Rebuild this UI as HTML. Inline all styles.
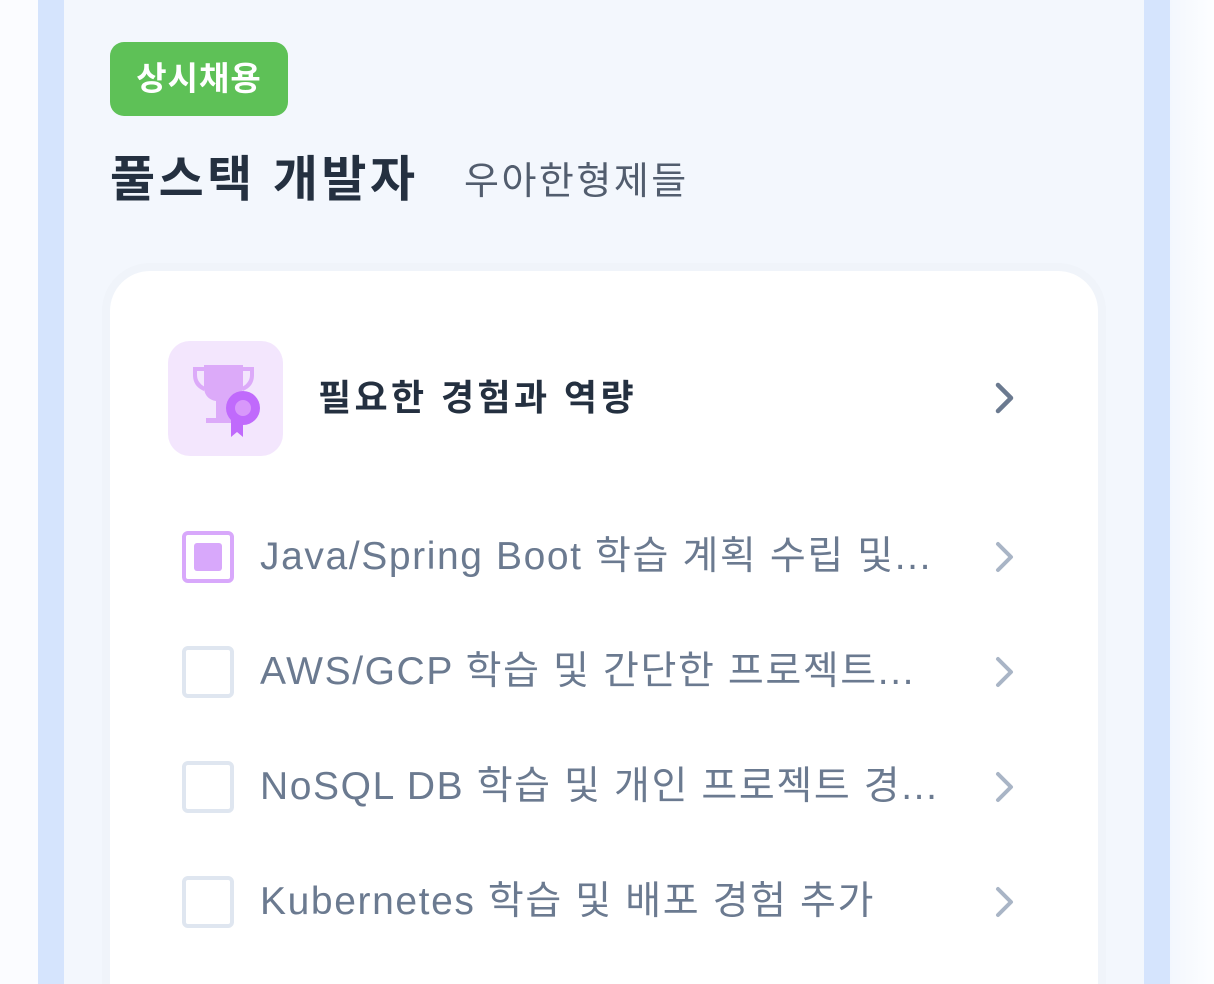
<!DOCTYPE html>
<html style="width:1214px;height:984px;overflow:hidden"><head><meta charset="utf-8"><style>
*{margin:0;padding:0;box-sizing:border-box}
body{width:1214px;height:984px;overflow:hidden;background:linear-gradient(90deg,#fbfcff 0,#fbfcff 38px,#fff 100%);font-family:"Liberation Sans","Noto Sans CJK KR",sans-serif;position:relative}
.wrap{position:absolute;left:0;top:0;width:1214px;height:984px;overflow:hidden}
.outer{position:absolute;left:38px;top:0;width:1132px;height:984px;background:#d5e4fd}
.inner{position:absolute;left:64px;top:0;width:1080px;height:984px;background:#f3f7fd}
.right{position:absolute;left:1170px;top:0;width:44px;height:984px;background:linear-gradient(90deg,#f3f7fe,#fdfeff)}
.badge{position:absolute;left:110px;top:42px;width:178px;height:74px;background:#5ec157;border-radius:14px;color:#fff;font-weight:700;font-size:33px;line-height:74px;text-align:center;letter-spacing:1px}
.title{position:absolute;left:110px;top:146px;font-size:49px;font-weight:700;color:#243040;line-height:68px;letter-spacing:3.5px}
.comp{position:absolute;left:464px;top:154px;font-size:38px;color:#525d6e;line-height:56px;letter-spacing:2.5px}
.card{position:absolute;left:110px;top:271px;width:988px;height:760px;background:#fff;border-radius:40px;box-shadow:0 0 0 8px #f0f4fa}
.ibox{position:absolute;left:168px;top:341px;width:115px;height:115px;border-radius:22px;background:#f3e6fd}
.h{position:absolute;left:318px;top:372px;font-size:36px;font-weight:700;color:#243040;line-height:52px;letter-spacing:3.4px}
.chev{position:absolute;left:993px;width:24px;height:36px}
.cb{position:absolute;left:182px;width:52px;height:52px;border:4px solid #dfe6f0;border-radius:6px}
.cb.on{border-color:#d8a8fb}
.cb.on::after{content:"";position:absolute;left:8px;top:8px;width:28px;height:28px;background:#d8a8fb;border-radius:3px}
.t{position:absolute;left:260px;font-size:39px;color:#6b7a90;line-height:56px;white-space:nowrap;letter-spacing:1.6px}
</style></head><body><div class="wrap">
<div class="outer"></div><div class="inner"></div><div class="right"></div>
<div class="badge">상시채용</div>
<div class="title">풀스택 개발자</div>
<div class="comp">우아한형제들</div>
<div class="card"></div>
<div class="ibox"><svg width="115" height="115" viewBox="0 0 115 115">
<path d="M25 26h12v4h-8v4c0 6 4 10 8 12l-1 4c-7-3-11-8-11-16z" fill="#dcaaf9"/>
<path d="M86 26H74v4h8v4c0 6-4 10-8 12l1 4c7-3 11-8 11-16z" fill="#dcaaf9"/>
<path d="M36 24h39v22c0 8-6 13-13 14v12h14v10H38v-5h10V60c-7-1-12-6-12-14z" fill="#dcaaf9"/>
<path d="M63 78v18l6-5 6 5V78z" fill="#c06afc"/>
<circle cx="75" cy="67" r="17" fill="#c06afc"/>
<circle cx="75" cy="67" r="8" fill="#d898fb"/>
</svg></div>
<div class="h">필요한 경험과 역량</div>
<svg class="chev" style="top:380px" viewBox="0 0 24 36"><path d="M5 5l13 13L5 31" fill="none" stroke="#6b7a90" stroke-width="4.5" stroke-linecap="round" stroke-linejoin="round"/></svg>

<div class="cb on" style="top:531px"></div>
<div class="t" style="top:529px">Java/Spring Boot 학습 계획 수립 및...</div>
<svg class="chev" style="top:539px" viewBox="0 0 24 36"><path d="M5 5l13 13L5 31" fill="none" stroke="#a9b5c6" stroke-width="4" stroke-linecap="round" stroke-linejoin="round"/></svg>

<div class="cb" style="top:646px"></div>
<div class="t" style="top:644px">AWS/GCP 학습 및 간단한 프로젝트...</div>
<svg class="chev" style="top:654px" viewBox="0 0 24 36"><path d="M5 5l13 13L5 31" fill="none" stroke="#a9b5c6" stroke-width="4" stroke-linecap="round" stroke-linejoin="round"/></svg>

<div class="cb" style="top:761px"></div>
<div class="t" style="top:759px">NoSQL DB 학습 및 개인 프로젝트 경...</div>
<svg class="chev" style="top:769px" viewBox="0 0 24 36"><path d="M5 5l13 13L5 31" fill="none" stroke="#a9b5c6" stroke-width="4" stroke-linecap="round" stroke-linejoin="round"/></svg>

<div class="cb" style="top:876px"></div>
<div class="t" style="top:874px">Kubernetes 학습 및 배포 경험 추가</div>
<svg class="chev" style="top:884px" viewBox="0 0 24 36"><path d="M5 5l13 13L5 31" fill="none" stroke="#a9b5c6" stroke-width="4" stroke-linecap="round" stroke-linejoin="round"/></svg>
</div></body></html>
